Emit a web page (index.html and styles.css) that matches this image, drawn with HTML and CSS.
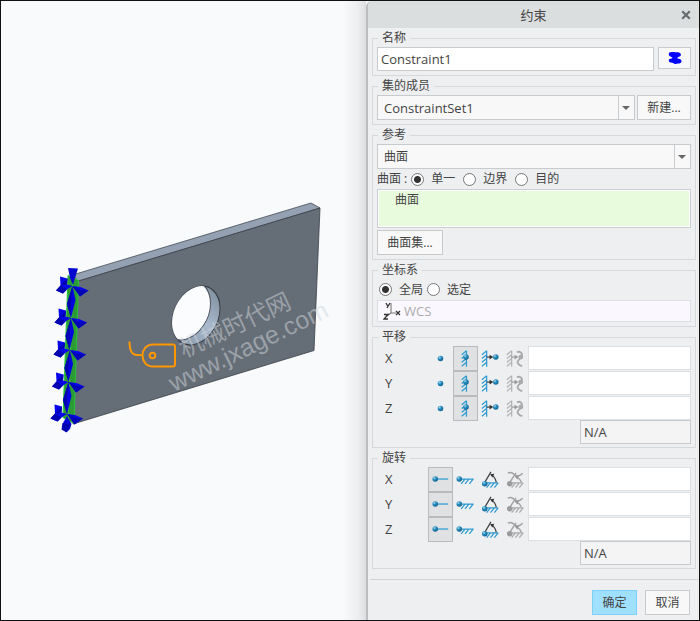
FILE: index.html
```html
<!DOCTYPE html>
<html lang="zh-CN">
<head>
<meta charset="utf-8">
<title>约束</title>
<link rel="stylesheet" href="styles.css">
</head>
<body>
<svg class="defs" aria-hidden="true">
  <defs>
    <radialGradient id="ball" cx=".35" cy=".3" r=".75">
      <stop offset="0" stop-color="#a9dcf3"/><stop offset=".4" stop-color="#2b8fc0"/><stop offset="1" stop-color="#0b5f8c"/>
    </radialGradient>
    <symbol id="t-free" viewBox="0 0 24 24"><circle cx="12" cy="12" r="2.9" fill="url(#ball)"/></symbol>
    <symbol id="t-fixed" viewBox="0 0 24 24">
      <path d="M13 4v16.500M13 4l-5 4M13 8l-5 4M13 12l-5 4M13 16l-5 4" fill="none" stroke="#2e9bd0" stroke-width="1.300"/>
      <circle cx="12.500" cy="10.500" r="2.900" fill="url(#ball)"/>
    </symbol>
    <symbol id="t-move" viewBox="0 0 24 24">
      <path d="M8 4v16.500M8 4l-5 4M8 8l-5 4M8 12l-5 4M8 16l-5 4" fill="none" stroke="#2e9bd0" stroke-width="1.300"/>
      <path d="M8 10.500h4" stroke="#333" stroke-width="1.200"/><path d="M11 8l4 2.500-4 2.500z" fill="#333"/>
      <circle cx="17.500" cy="10.500" r="2.900" fill="url(#ball)"/>
    </symbol>
    <symbol id="t-func" viewBox="0 0 24 24">
      <path d="M8 4v16.500M8 4l-5 4M8 8l-5 4M8 12l-5 4M8 16l-5 4" fill="none" stroke="#b3b3b3" stroke-width="1.300"/>
      <path d="M8 10.500h4" stroke="#999" stroke-width="1.200"/><path d="M11 8l4 2.500-4 2.500z" fill="#999"/>
      <path d="M13.500 5.500c4-2 6.500 2 4.500 5s-5 4-3.500 6.500 2.500 2 4.500 3" fill="none" stroke="#aaa" stroke-width="1.900"/>
      <circle cx="17.500" cy="10.500" r="2.500" fill="#aaa"/>
    </symbol>
    <symbol id="r-free" viewBox="0 0 24 24">
      <path d="M6 11.500h14" stroke="#2e9bd0" stroke-width="1.300"/><circle cx="6.500" cy="11.500" r="2.900" fill="url(#ball)"/>
    </symbol>
    <symbol id="r-fixed" viewBox="0 0 24 24">
      <path d="M5 11.500h15.500M11.500 11.500l-4 5M15.500 11.500l-4 5M20 11.500l-4 5" fill="none" stroke="#2e9bd0" stroke-width="1.300"/>
      <circle cx="5.500" cy="11.500" r="2.900" fill="url(#ball)"/>
    </symbol>
    <symbol id="r-move" viewBox="0 0 24 24">
      <path d="M6 15.500h14M12 15.500l-4 5M16 15.500l-4 5M20 15.500l-4 5" fill="none" stroke="#2e9bd0" stroke-width="1.300"/>
      <path d="M6 15l6.500-11M13.500 7.500c3 2 4 4 4.500 7.500" fill="none" stroke="#444" stroke-width="1.300"/>
      <path d="M11.500 6.500l4.500-.5-2 4z" fill="#333"/><circle cx="6" cy="16.500" r="2.900" fill="url(#ball)"/>
    </symbol>
    <symbol id="r-func" viewBox="0 0 24 24">
      <path d="M6 15.500h14M12 15.500l-4 5M16 15.500l-4 5M20 15.500l-4 5" fill="none" stroke="#aaa" stroke-width="1.300"/>
      <path d="M6 15l6.500-10M12.500 9.500c3 1 5 3 5.500 5.500M4 5.500c3-2 4.500-1 6.500 1s5 3 9-1" fill="none" stroke="#a2a2a2" stroke-width="1.500"/>
      <path d="M11 8.500l5-1-2 4.500z" fill="#999"/><circle cx="6" cy="16.500" r="2.900" fill="#9c9c9c"/>
    </symbol>
  </defs>
</svg>

<main class="window">
  <section class="scene">
    <svg class="model" viewBox="1 1 365 617" preserveAspectRatio="xMinYMin meet" role="img" aria-label="机械时代网 www.jxage.com">
      <defs>
        <linearGradient id="bore" x1="0" y1="1" x2="1" y2="0">
          <stop offset="0" stop-color="#7f8d9d"/><stop offset=".5" stop-color="#a9bace"/><stop offset="1" stop-color="#75828f"/>
        </linearGradient>
        <clipPath id="hole"><ellipse rx="24" ry="28.500" transform="matrix(1 -.3 0 1 196 315.500)"/></clipPath>
        <g id="fix">
          <path d="M-12.500-9.500L-5-7.500-5.500-1.500 0 0-5.500 3.500l-4 4-7-3 4.500-5z" fill="#0505e8"/>
          <path d="M-5-7.500L-5.500-1.500-12-.5zM-12-.5l6.500 4-4 4-7-3z" fill="#0202b0"/>
          <path d="M0 0l8 1 8 3.500-8.500 6z" fill="#0505e8"/><path d="M0 0l8 4 8 .5-8.500 6z" fill="#0303b8"/>
        </g>
        <g id="spindle">
          <path d="M0 0l3 14L-1.500 32l-4-14z" fill="#0505e0"/><path d="M0 0l-1.500 17v15l-4-14z" fill="#0303b0"/>
        </g>
      </defs>
      <path d="M74 274.500L311 203l9 5L77 281.500z" fill="#94a1b2" stroke="#444b54" stroke-width=".8"/>
      <path d="M77 281.500L320 208 314 350.500 73 424z" fill="#656d77" stroke="#3a4048" stroke-width=".8"/>
      <ellipse rx="24" ry="28.500" transform="matrix(1 -.3 0 1 196 315.500)" fill="url(#bore)" stroke="#353c45"/>
      <g clip-path="url(#hole)"><ellipse rx="24" ry="28.500" transform="matrix(1 -.3 0 1 186.500 310.500)" fill="#fbfcfe" stroke="#4a535e"/></g>
      <path d="M68 275.500l10.500 5L74 423.500 63 417.500z" fill="#2c9a35" stroke="#25c43c"/>
      <path d="M73 277L68 420" stroke="#35c847"/>
      <path d="M68 268l10 .5-3 9.500-2 7-3-7z" fill="#0505d0"/>
      <use href="#spindle" x="72.500" y="286"/><use href="#spindle" x="71" y="318"/><use href="#spindle" x="70" y="350"/><use href="#spindle" x="68.500" y="382"/>
      <use href="#fix" x="72.500" y="286"/><use href="#fix" x="71" y="318"/><use href="#fix" x="70" y="350"/><use href="#fix" x="68.500" y="382"/><use href="#fix" x="67" y="414"/>
      <path d="M67 416l4.500 8-1.500 5-3 3-5-3 1-6z" fill="#0505d8"/>
      <path d="M62.500 423l8 1-4 8.500-5-3z" fill="#0303b0"/>
      <g class="watermark">
        <text transform="translate(184 358) rotate(-25)" font-size="24">机械时代网</text>
        <text transform="translate(174 392) rotate(-26)" font-size="25">www.jxage.com</text>
      </g>
      <g fill="none" stroke="#ff9800" stroke-width="2">
        <path d="M129.500 341.500c0 9 2 13.500 7.500 13.500h5"/>
        <path d="M153 344.500h20q2 0 2 2v18q0 2-2 2h-20c-14 0-14-22 0-22z"/><circle cx="152.500" cy="355.500" r="2.800"/>
      </g>
    </svg>
  </section>

  <form class="panel">
    <header class="titlebar">
      <h1>约束</h1>
      <button type="button" class="close" aria-label="关闭"><svg viewBox="0 0 8 8"><path d="M1 1l6 6M7 1L1 7" stroke="#666b70" stroke-width="1.800"/></svg></button>
    </header>
    <div class="groups">
      <fieldset>
        <legend>名称</legend>
        <div class="line">
          <input class="box name" type="text" value="Constraint1" aria-label="名称">
          <button type="button" class="btn swatch" aria-label="颜色"><svg viewBox="0 0 14 14"><path d="M1.500 1.500C3 .5 5 1 6.500 1c2 .5 4-.5 5.500 1s1 3-.5 3.500C10 6 9 6.500 9.500 7.500c2 0 4 1 4 2.500s-1 2.500-2.500 2.500-3 .5-4 .5-2-1.500-4-1.500C1 11.500.5 9.500 1 8.500S3.500 8 4.500 7c0-1-2-1-3-2S.5 2.500 1.500 1.500z" fill="#00f"/></svg></button>
        </div>
      </fieldset>
      <fieldset>
        <legend>集的成员</legend>
        <div class="line tight">
          <div class="pick"><select class="latin" aria-label="集的成员"><option>ConstraintSet1</option></select></div>
          <button type="button" class="btn create">新建...</button>
        </div>
      </fieldset>
      <fieldset>
        <legend>参考</legend>
        <div class="pick"><select aria-label="参考"><option>曲面</option></select></div>
        <div class="radios">
          <span>曲面 :</span>
          <label><input type="radio" name="surface" checked>单一</label>
          <label><input type="radio" name="surface">边界</label>
          <label><input type="radio" name="surface">目的</label>
        </div>
        <div class="collector">曲面</div>
        <button type="button" class="btn sets">曲面集...</button>
      </fieldset>
      <fieldset>
        <legend>坐标系</legend>
        <div class="radios system">
          <label><input type="radio" name="csys" checked>全局</label>
          <label><input type="radio" name="csys">选定</label>
        </div>
        <div class="wcs">
          <svg viewBox="0 0 18 18"><path d="M8 1v10h5M8 11l-4 3" fill="none" stroke="#777" stroke-width="1.100"/><path d="M3 1l2 3.500M7 1L4 6M13 9l4 4M17 9l-4 4M1 12.500h4l-4 4.500h4" fill="none" stroke="#333" stroke-width="1.300"/></svg>
          <span>WCS</span>
        </div>
      </fieldset>
      <fieldset class="motion">
        <legend>平移</legend>
        <div class="axis"><label for="tx">X</label>
          <button type="button" aria-label="自由"><svg><use href="#t-free"/></svg></button><button type="button" class="on" aria-label="固定"><svg><use href="#t-fixed"/></svg></button><button type="button" aria-label="规定"><svg><use href="#t-move"/></svg></button><button type="button" disabled aria-label="函数"><svg><use href="#t-func"/></svg></button>
          <input id="tx" type="text"></div>
        <div class="axis"><label for="ty">Y</label>
          <button type="button" aria-label="自由"><svg><use href="#t-free"/></svg></button><button type="button" class="on" aria-label="固定"><svg><use href="#t-fixed"/></svg></button><button type="button" aria-label="规定"><svg><use href="#t-move"/></svg></button><button type="button" disabled aria-label="函数"><svg><use href="#t-func"/></svg></button>
          <input id="ty" type="text"></div>
        <div class="axis"><label for="tz">Z</label>
          <button type="button" aria-label="自由"><svg><use href="#t-free"/></svg></button><button type="button" class="on" aria-label="固定"><svg><use href="#t-fixed"/></svg></button><button type="button" aria-label="规定"><svg><use href="#t-move"/></svg></button><button type="button" disabled aria-label="函数"><svg><use href="#t-func"/></svg></button>
          <input id="tz" type="text"></div>
        <input class="box unit" type="text" value="N/A" readonly aria-label="平移单位">
      </fieldset>
      <fieldset class="motion">
        <legend>旋转</legend>
        <div class="axis"><label for="rx">X</label>
          <button type="button" class="on" aria-label="自由"><svg><use href="#r-free"/></svg></button><button type="button" aria-label="固定"><svg><use href="#r-fixed"/></svg></button><button type="button" aria-label="规定"><svg><use href="#r-move"/></svg></button><button type="button" disabled aria-label="函数"><svg><use href="#r-func"/></svg></button>
          <input id="rx" type="text"></div>
        <div class="axis"><label for="ry">Y</label>
          <button type="button" class="on" aria-label="自由"><svg><use href="#r-free"/></svg></button><button type="button" aria-label="固定"><svg><use href="#r-fixed"/></svg></button><button type="button" aria-label="规定"><svg><use href="#r-move"/></svg></button><button type="button" disabled aria-label="函数"><svg><use href="#r-func"/></svg></button>
          <input id="ry" type="text"></div>
        <div class="axis"><label for="rz">Z</label>
          <button type="button" class="on" aria-label="自由"><svg><use href="#r-free"/></svg></button><button type="button" aria-label="固定"><svg><use href="#r-fixed"/></svg></button><button type="button" aria-label="规定"><svg><use href="#r-move"/></svg></button><button type="button" disabled aria-label="函数"><svg><use href="#r-func"/></svg></button>
          <input id="rz" type="text"></div>
        <input class="box unit" type="text" value="N/A" readonly aria-label="旋转单位">
      </fieldset>
    </div>
    <footer class="actions">
      <button type="button" class="btn primary">确定</button>
      <button type="button" class="btn">取消</button>
    </footer>
  </form>
</main>
</body>
</html>
```
FILE: styles.css
```css
* { box-sizing: border-box; }

body {
  margin: 0;
  color: #444;
  font: 12px/16px "Open Sans", "Noto Sans CJK SC", sans-serif;
}

button, input, select { margin: 0; color: inherit; font: inherit; }

.defs { position: absolute; width: 0; height: 0; }

.window {
  display: grid;
  grid-template-columns: minmax(0, 1fr) 333px;
  min-height: 100vh;
  border: 1px solid #111;
  background: #f8fafc;
}

.scene {
  background: linear-gradient(to left, #dcdedf, #eceef0 8px, #f8fafc 24px);
}
.model { display: block; width: 100%; }
.watermark {
  fill: #d2d6da;
  fill-opacity: .5;
  font-family: "Liberation Sans", "Noto Sans CJK SC", sans-serif;
}

.panel {
  display: flex;
  flex-direction: column;
  border-left: 2px solid #bbbec0;
  border-radius: 6px 0 0 0;
  background: #eeeff1;
  overflow: hidden;
}

.titlebar {
  display: grid;
  grid-template-columns: 1fr auto 1fr;
  align-items: center;
  height: 27px;
  padding: 0 8px;
  background: #dadede;
}
.titlebar h1 { grid-column: 2; margin: 0; font-size: 13px; font-weight: 400; }
.close { justify-self: end; width: 10px; height: 10px; padding: 0; border: 0; background: none; }
.close svg { display: block; width: 10px; height: 10px; }

.groups {
  display: flex;
  flex-direction: column;
  gap: 2px;
  padding: 2px 3px 0 4px;
}
fieldset {
  min-width: 0;
  margin: 0;
  padding: 1px 4px 4px;
  border: 1px solid #d6d9db;
}
legend { margin-left: 1px; padding: 0 4px; }

.line { display: flex; gap: 4px; }
.tight { gap: 2px; }

.box {
  height: 24px;
  padding: 0 3px;
  border: 1px solid #c8cbce;
  font-size: 13px;
  background: #fff;
}
.name { flex: 1; min-width: 0; }

.btn {
  height: 25px;
  padding: 0 9px;
  border: 1px solid #c8cbce;
  background: #f8f8f8;
}
.swatch { display: grid; place-items: center; width: 33px; height: 22px; padding: 0; }
.swatch svg { width: 14px; height: 14px; }
.create { width: 54px; padding: 0; }

.pick { position: relative; flex: 1; }
.pick select {
  display: block;
  width: 100%;
  height: 25px;
  padding: 0 20px 0 6px;
  border: 1px solid #c8cbce;
  border-radius: 0;
  appearance: none;
  background: #f8f8f8;
}
.pick select.latin { font-size: 13px; }
.pick::before {
  content: "";
  position: absolute;
  top: 1px;
  right: 16px;
  bottom: 1px;
  border-left: 1px solid #c8cbce;
}
.pick::after {
  content: "";
  position: absolute;
  top: 11px;
  right: 5px;
  border: 4px solid transparent;
  border-top-color: #666;
  border-bottom: 0;
}

.radios { display: flex; align-items: center; gap: 8px; height: 20px; }
.radios span { margin-right: -4px; }
.radios label { display: flex; align-items: center; gap: 7px; }
.radios input {
  width: 13px;
  height: 13px;
  border: 1px solid #777;
  border-radius: 50%;
  appearance: none;
  background: #fff;
}
.radios input:checked { background: radial-gradient(circle, #333 3px, #fff 4px); }
.system { gap: 4px; height: 21px; padding-left: 2px; }

.collector {
  height: 39px;
  padding: 2px 17px;
  border: 1px solid #ccd0d3;
  background: #e9fbdd;
  box-shadow: inset 0 0 0 1px #fff;
}
.sets { display: block; width: 66px; margin-top: 2px; padding: 0; }

.wcs {
  display: flex;
  align-items: center;
  gap: 3px;
  height: 22px;
  padding: 0 5px;
  border: 1px solid #dde0e2;
  color: #aaa;
  font-size: 13px;
  background: #faf8fe;
}
.wcs svg { width: 18px; height: 18px; }

.motion { padding-bottom: 3px; }
.axis {
  display: grid;
  grid-template-columns: 51px repeat(4, 25px) minmax(0, 1fr);
  height: 25px;
}
.axis label { padding: 4px 8px; font-size: 13px; }
.axis button { padding: 0; border: 1px solid transparent; background: none; }
.axis button.on { border-color: #b9bcbe; background: #dfe1e3; }
.axis svg { display: block; width: 23px; height: 23px; }
.axis input {
  width: 100%;
  height: 24px;
  padding: 0 4px;
  border: 1px solid #dde0e2;
  background: #fff;
}
.unit {
  display: block;
  width: 111px;
  margin: -1px 0 0 auto;
  border-color: #c8cbce;
  background: #f4f4f5;
}

.actions {
  display: flex;
  justify-content: flex-end;
  gap: 8px;
  margin: 10px 0 0 2px;
  padding: 10px 9px 4px 0;
  border-top: 1px solid #d0d3d6;
}
.actions .btn { width: 45px; padding: 0; }
.actions .primary { border-color: #7fd0f8; background: #a0e0ff; }
```
